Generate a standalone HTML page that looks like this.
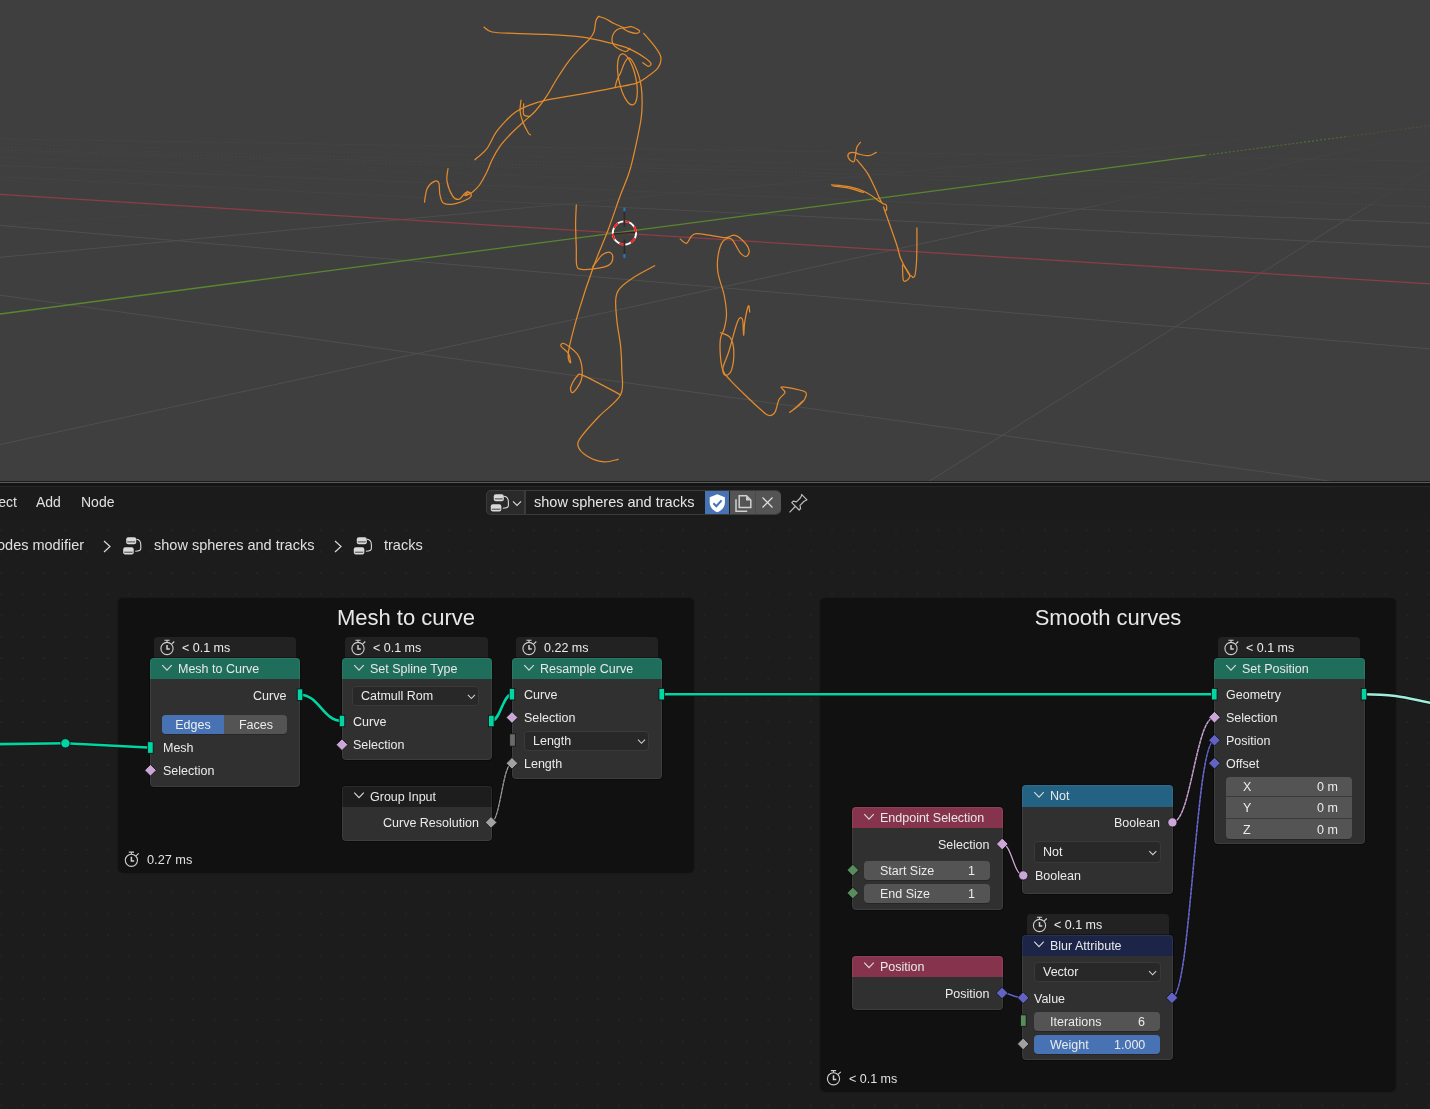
<!DOCTYPE html><html><head><meta charset="utf-8"><style>html,body{margin:0;padding:0}body{width:1430px;height:1109px;overflow:hidden;position:relative;background:#1b1b1b;font-family:"Liberation Sans", sans-serif}.a{position:absolute}.t{position:absolute;white-space:nowrap;line-height:1;will-change:transform}</style></head><body>
<svg class="a" style="left:0;top:0" width="1430" height="481" viewBox="0 0 1430 481">
<rect width="1430" height="481" fill="#3f3f3f"/>
<defs><linearGradient id="gf" x1="0" y1="0" x2="0" y2="481" gradientUnits="userSpaceOnUse"><stop offset="0.24" stop-color="#fff" stop-opacity="0"/><stop offset="0.33" stop-color="#fff" stop-opacity="0.3"/><stop offset="0.415" stop-color="#fff" stop-opacity="0.25"/><stop offset="0.435" stop-color="#fff" stop-opacity="0.8"/><stop offset="0.46" stop-color="#fff" stop-opacity="1"/></linearGradient><mask id="gm"><rect width="1430" height="481" fill="url(#gf)"/></mask></defs><g mask="url(#gm)">
<line x1="-10" y1="143.74" x2="1440" y2="178.23" stroke="#4f4f4f" stroke-width="1" stroke-opacity="1.00" stroke-dasharray="2 1.5"/>
<line x1="-10" y1="147.23" x2="1440" y2="185.64" stroke="#4f4f4f" stroke-width="1" stroke-opacity="1.00" stroke-dasharray="2 1.5"/>
<line x1="-10" y1="151.64" x2="1440" y2="195.00" stroke="#4f4f4f" stroke-width="1" stroke-opacity="1.00" stroke-dasharray="2 1.5"/>
<line x1="-10" y1="157.39" x2="1440" y2="207.20" stroke="#4f4f4f" stroke-width="1" stroke-opacity="1.00" stroke-dasharray="2 1.5"/>
<line x1="-10" y1="165.19" x2="1440" y2="223.75" stroke="#4f4f4f" stroke-width="1" stroke-opacity="1.00" />
<line x1="-10" y1="176.37" x2="1440" y2="247.50" stroke="#4f4f4f" stroke-width="1" stroke-opacity="1.00" />
<line x1="-10" y1="224.55" x2="1440" y2="349.74" stroke="#4f4f4f" stroke-width="1" stroke-opacity="1.00" />
<line x1="-10" y1="293.74" x2="1440" y2="496.58" stroke="#4f4f4f" stroke-width="1" stroke-opacity="1.00" />
<line x1="-10" y1="181.51" x2="1440" y2="117.75" stroke="#4f4f4f" stroke-width="1" stroke-opacity="0.35" stroke-dasharray="2 1.5"/>
<line x1="-10" y1="191.89" x2="1440" y2="118.26" stroke="#4f4f4f" stroke-width="1" stroke-opacity="0.35" stroke-dasharray="2 1.5"/>
<line x1="-10" y1="206.02" x2="1440" y2="118.94" stroke="#4f4f4f" stroke-width="1" stroke-opacity="0.35" stroke-dasharray="2 1.5"/>
<line x1="-10" y1="226.38" x2="1440" y2="119.93" stroke="#4f4f4f" stroke-width="1" stroke-opacity="0.35" stroke-dasharray="2 1.5"/>
<line x1="-10" y1="258.27" x2="1440" y2="121.48" stroke="#4f4f4f" stroke-width="1" stroke-opacity="1.00" />
<line x1="-10" y1="446.73" x2="1440" y2="130.63" stroke="#4f4f4f" stroke-width="1" stroke-opacity="1.00" />
<line x1="-10" y1="1070.08" x2="1440" y2="160.90" stroke="#4f4f4f" stroke-width="1" stroke-opacity="1.00" />
</g>
<line x1="-10" y1="138.84" x2="1440" y2="161.32" stroke="#4a4a4a" stroke-width="1" stroke-dasharray="2 1.5" stroke-opacity="0.6"/>
<line x1="-10" y1="149.72" x2="1440" y2="190.32" stroke="#4a4a4a" stroke-width="1" stroke-dasharray="2 1.5" stroke-opacity="0.6"/>
<line x1="-10" y1="193.77" x2="1440" y2="284.43" stroke="#8f3c47" stroke-width="1.3" />
<line x1="-10" y1="315.32" x2="1205" y2="155.22" stroke="#5a862f" stroke-width="1.3"/>
<line x1="1205" y1="155.22" x2="1345" y2="136.77" stroke="#5a862f" stroke-width="1.1" stroke-dasharray="2 2" stroke-opacity="0.7"/>
<line x1="1345" y1="136.77" x2="1440" y2="124.25" stroke="#5a862f" stroke-width="1.1" stroke-dasharray="2 2" stroke-opacity="0.3"/>
<g fill="none" stroke="#e38b2c" stroke-width="1.25" stroke-linecap="round" stroke-linejoin="round">
<path d="M484.0 27.1C485.4 27.9 487.1 30.9 492.1 32.0C497.1 33.0 504.8 33.0 513.8 33.4C522.8 33.8 536.4 33.9 546.3 34.4C556.2 34.9 566.1 35.6 573.3 36.2C580.5 36.9 583.6 37.2 589.6 38.3C595.6 39.4 602.8 41.0 609.4 42.8C616.0 44.5 623.5 46.4 629.2 48.8C634.9 51.1 640.1 54.5 643.7 56.9C647.3 59.3 650.1 61.6 650.9 63.2C651.6 64.8 649.6 66.4 648.2 66.3C646.9 66.2 643.7 63.3 642.8 62.7"/>
<path d="M598.6 16.3C598.1 17.1 596.6 18.2 595.9 20.8C595.1 23.4 595.1 28.6 594.1 31.6C593.1 34.6 592.2 35.9 589.6 38.9C587.0 41.9 582.3 45.8 578.7 49.7C575.1 53.6 571.5 57.5 567.9 62.3C564.3 67.1 560.7 72.8 557.1 78.5C553.5 84.2 549.9 91.2 546.3 96.6C542.7 102.0 539.0 107.0 535.4 111.0C531.8 115.0 528.8 117.0 524.6 120.9C520.4 124.8 514.4 130.1 510.2 134.5C506.0 138.9 502.4 142.9 499.4 147.1C496.4 151.3 494.2 155.5 492.1 159.7C490.0 163.9 488.8 168.1 486.7 172.3C484.6 176.5 481.9 181.7 479.5 185.0C477.1 188.3 474.7 190.4 472.3 192.2C469.9 193.9 465.6 195.5 465.0 195.5C464.4 195.5 467.6 192.3 468.7 192.2C469.8 192.1 471.4 193.8 471.4 194.9C471.4 196.0 471.5 197.0 468.7 198.5C465.9 200.0 458.5 203.2 454.3 203.9C450.1 204.7 445.8 204.7 443.4 203.0C441.0 201.3 440.6 197.3 439.8 194.0C439.1 190.7 439.8 185.3 438.9 183.2C438.0 181.1 436.3 180.5 434.4 181.4C432.4 182.3 428.8 185.2 427.2 188.6C425.6 192.0 424.9 199.8 424.5 202.1"/>
<path d="M448.0 168.7C447.8 170.8 446.2 176.9 447.0 181.4C447.8 185.9 450.5 192.8 452.5 195.8C454.5 198.8 456.9 199.7 458.8 199.4C460.8 199.1 462.7 195.3 464.2 194.0C465.7 192.7 467.2 191.8 467.8 191.3"/>
<path d="M598.6 16.3C599.8 16.8 603.4 17.8 606.0 19.0C608.6 20.2 611.0 22.1 614.0 23.5C617.0 24.9 621.2 27.1 624.1 27.6C627.0 28.1 628.8 26.2 631.3 26.7C633.8 27.2 638.5 29.6 639.4 30.7C640.3 31.8 638.5 33.2 636.7 33.4C634.9 33.5 630.9 32.4 628.6 31.6C626.4 30.8 624.1 29.0 623.2 28.5"/>
<path d="M624.1 27.6C622.9 28.0 618.9 28.4 616.9 29.8C614.9 31.2 613.1 33.8 612.4 36.1C611.7 38.4 611.8 41.3 612.8 43.4C613.8 45.5 616.5 47.4 618.7 48.8C620.9 50.1 624.0 51.6 625.9 51.5C627.8 51.4 629.3 48.8 630.0 48.3"/>
<path d="M643.7 33.4C645.5 35.5 651.6 42.2 654.5 46.1C657.4 50.0 660.2 53.3 660.8 56.9C661.4 60.5 660.4 64.4 658.1 67.7C655.9 71.0 650.9 74.1 647.3 76.7C643.7 79.3 641.9 81.3 636.5 83.1C631.1 84.9 623.8 85.8 614.8 87.6C605.8 89.4 593.7 91.8 582.3 93.9C570.9 96.0 555.3 98.2 546.3 100.2C537.3 102.2 533.3 103.6 528.2 105.6C523.1 107.5 519.2 109.5 515.6 111.9C512.0 114.3 509.9 116.5 506.6 120.0C503.3 123.5 499.1 127.9 495.8 132.7C492.5 137.5 490.2 144.4 486.7 148.9C483.2 153.4 476.9 157.9 475.0 159.7"/>
<path d="M615.1 87.5C615.4 86.2 616.1 82.4 617.0 80.0C617.9 77.6 619.2 75.9 620.5 73.1C621.8 70.3 623.1 65.5 624.5 63.0C625.9 60.5 627.2 57.9 628.6 57.8C630.0 57.7 631.5 59.4 633.1 62.3C634.8 65.2 637.1 70.9 638.5 74.9C639.9 79.0 640.6 82.4 641.2 86.6C641.8 90.8 642.1 95.0 642.1 100.2C642.1 105.4 642.3 110.2 641.2 118.0C640.1 125.8 637.5 138.0 635.5 147.1C633.5 156.2 631.8 164.2 629.2 172.3C626.7 180.4 623.7 186.3 620.2 195.8C616.7 205.3 612.8 217.5 608.4 229.2C604.0 240.8 598.7 252.3 593.8 265.7C588.9 279.1 583.2 296.2 579.2 309.6C575.2 323.0 571.3 338.0 569.5 346.1C567.7 354.2 568.1 355.5 568.3 358.3C568.5 361.1 570.7 363.5 570.7 362.7C570.7 361.9 569.9 356.2 568.3 353.4C566.7 350.6 561.6 347.7 561.0 346.1C560.4 344.5 562.0 342.5 564.6 343.7C567.2 344.9 573.9 349.8 576.8 353.4C579.6 357.0 581.0 361.1 581.7 365.6C582.4 370.1 582.6 375.7 581.2 380.2C579.8 384.7 574.9 391.2 573.1 392.4C571.4 393.6 570.1 390.1 570.7 387.5C571.3 384.9 574.6 378.4 576.8 376.5C579.0 374.6 576.8 372.8 584.1 375.8C591.4 378.9 614.5 391.6 620.6 394.8"/>
<path d="M576.3 204.9C576.2 208.1 575.6 217.0 575.6 224.3C575.6 231.6 576.1 241.8 576.3 248.7C576.5 255.6 575.9 262.2 576.8 265.7C577.7 269.1 578.1 269.0 581.7 269.4C585.4 269.8 594.0 269.0 598.7 268.2C603.4 267.4 607.4 266.3 609.7 264.5C612.1 262.7 612.8 259.2 612.8 257.2C612.8 255.2 611.5 252.7 609.7 252.3C608.0 251.9 604.5 253.2 602.3 254.8C600.1 256.4 597.9 260.1 596.3 262.1C594.7 264.1 593.2 266.2 592.6 267.0"/>
<path d="M654.7 265.7C651.1 267.7 638.7 274.0 632.8 277.9C626.9 281.8 622.2 285.2 619.4 288.9C616.5 292.5 616.1 294.3 615.7 299.8C615.3 305.3 616.2 314.0 617.0 321.7C617.8 329.4 619.8 338.0 620.6 346.1C621.4 354.2 621.8 362.3 621.8 370.4C621.8 378.5 624.5 387.1 620.6 394.8C616.8 402.5 605.2 409.8 598.7 416.7C592.2 423.6 585.2 431.3 581.7 436.2C578.2 441.1 577.2 442.6 578.0 445.9C578.8 449.1 582.2 453.0 586.5 455.7C590.8 458.4 598.3 461.2 603.6 461.8C608.9 462.4 615.8 459.7 618.2 459.3"/>
<path d="M680.3 239.0C681.3 239.7 684.6 243.7 686.4 243.3C688.2 242.9 689.6 238.1 691.2 236.5C692.8 234.9 692.9 233.8 696.1 233.6C699.4 233.4 705.8 234.6 710.7 235.3C715.6 236.0 721.2 237.7 725.3 237.7C729.4 237.7 731.9 234.5 735.1 235.3C738.4 236.1 742.4 240.0 744.8 242.6C747.1 245.2 749.0 248.8 749.2 251.1C749.4 253.4 747.5 256.3 746.0 256.5C744.5 256.7 742.3 255.2 739.9 252.3C737.5 249.4 734.2 240.8 731.4 239.0C728.6 237.2 725.1 238.6 722.9 241.4C720.7 244.2 718.8 250.7 718.0 256.0C717.2 261.3 717.0 266.5 718.0 273.0C719.0 279.5 722.7 288.1 724.1 295.0C725.5 301.9 726.5 308.7 726.5 314.4C726.5 320.1 725.1 324.9 724.1 329.0C723.1 333.1 721.0 334.3 720.4 338.8C719.8 343.3 720.0 350.5 720.4 355.8C720.8 361.1 721.3 366.3 722.9 370.4C724.5 374.5 726.6 376.1 730.2 380.2C733.9 384.3 739.5 389.7 744.8 394.8C750.1 399.9 757.8 407.2 761.8 410.6C765.8 414.1 766.9 415.3 769.1 415.5C771.3 415.7 773.6 414.4 775.2 411.8C776.8 409.2 777.3 402.9 778.9 399.7C780.5 396.5 784.6 394.5 785.0 392.4C785.4 390.3 779.9 387.6 781.3 387.0C782.7 386.4 789.4 387.8 793.5 388.7C797.6 389.6 803.9 390.6 805.7 392.4C807.5 394.2 805.6 397.5 804.4 399.7C803.2 401.9 800.8 403.6 798.4 405.7C796.0 407.8 790.6 411.7 789.8 412.3C789.0 412.9 791.3 411.4 793.5 409.5C795.7 407.6 801.4 402.4 803.0 401.0"/>
<path d="M720.4 332.7C722.0 333.5 728.0 334.6 730.2 337.6C732.4 340.7 733.6 345.5 733.8 351.0C734.0 356.5 732.8 366.3 731.4 370.4C730.0 374.4 726.7 375.7 725.3 375.3C723.9 374.9 722.3 372.1 722.9 368.0C723.5 363.9 726.6 358.7 729.0 351.0C731.4 343.3 735.3 327.0 737.5 321.7C739.7 316.4 741.4 317.1 742.4 319.3C743.4 321.5 743.2 334.7 743.6 335.1C744.0 335.5 744.0 326.6 744.8 321.7C745.6 316.8 747.6 307.5 748.4 305.9C749.2 304.3 749.5 311.0 749.7 312.0"/>
<path d="M860.4 142.3C859.8 143.1 857.6 144.9 856.8 147.3C855.9 149.7 855.8 154.3 855.3 156.7C854.8 159.1 854.8 161.2 853.9 161.7C853.0 162.2 850.6 160.8 849.6 159.6C848.6 158.4 847.6 155.7 848.1 154.5C848.6 153.3 850.5 152.4 852.5 152.4C854.5 152.4 857.6 153.9 860.4 154.5C863.1 155.1 866.4 156.0 869.0 155.7C871.6 155.3 875.1 152.9 876.3 152.4"/>
<path d="M856.8 159.6C858.6 161.9 864.5 168.4 867.6 173.3C870.7 178.2 873.0 184.1 875.4 189.0C877.8 193.9 880.0 200.0 881.7 202.6C883.4 205.2 885.0 203.3 885.8 204.4C886.6 205.5 886.8 207.9 886.7 209.0C886.6 210.1 885.8 211.1 885.3 210.8C884.8 210.5 883.0 205.6 883.5 207.1C884.0 208.6 885.7 213.3 888.0 219.8C890.3 226.3 895.0 239.5 897.1 246.0C899.2 252.5 898.8 253.9 900.7 258.6C902.7 263.3 907.1 271.1 908.8 274.0C910.5 276.9 910.4 275.1 911.1 275.7C911.9 276.3 912.6 277.6 913.3 277.5C914.0 277.4 914.6 277.4 915.1 274.8C915.6 272.2 916.2 267.0 916.5 262.2C916.8 257.4 916.8 251.7 916.9 246.0C917.0 240.3 916.9 230.9 916.9 227.9"/>
<path d="M902.5 264.9C902.6 267.5 902.5 277.9 903.4 280.3C904.3 282.7 906.8 280.3 907.9 279.4C909.0 278.5 910.4 277.0 909.7 274.8C909.1 272.6 905.0 267.5 904.0 266.0"/>
<path d="M831.5 184.8C834.4 185.1 843.0 185.4 848.8 186.7C854.6 188.0 860.9 189.9 866.2 192.5C871.5 195.1 878.2 200.5 880.6 202.1"/>
<path d="M833.0 186.0C835.6 186.4 843.8 187.1 848.8 188.2C853.8 189.3 860.9 191.8 863.3 192.5"/>
<path d="M521.0 100.2C520.9 102.0 519.8 107.4 520.1 111.0C520.4 114.6 521.4 118.2 522.8 121.8C524.1 125.4 526.9 130.5 528.2 132.7C529.5 134.9 530.0 134.5 530.4 134.8"/>
<path d="M523.7 103.8C523.7 105.6 522.7 112.5 523.7 114.6C524.8 116.7 529.0 116.1 530.0 116.4"/>

<ellipse cx="627.4" cy="79.4" rx="8.5" ry="26" transform="rotate(-12 627.4 79.4)"/>
</g>
<circle cx="624.4" cy="233.0" r="11.6" fill="none" stroke="#ffffff" stroke-width="1.9"/>
<circle cx="624.4" cy="233.0" r="11.6" fill="none" stroke="#ff1a1a" stroke-width="1.9" stroke-dasharray="6.07 6.07" transform="rotate(-95 624.4 233.0)"/>
<path d="M613.4 233.6L635.4 232.6" stroke="#151515" stroke-width="1.3" stroke-opacity="0.7"/>
<path d="M624.4 211V226.5M624.4 239.5V254" stroke="#2a2a2a" stroke-width="1.6"/>
<path d="M624.4 207.5V211.5M624.4 254V258" stroke="#2f6fd0" stroke-width="2"/>
</svg>
<div class="a" style="left:0.00px;top:481.50px;width:1430.00px;height:1.70px;background:#5a5a5a;"></div>
<div class="a" style="left:0.00px;top:483.20px;width:1430.00px;height:2.80px;background:#141414;"></div>
<div class="a" style="left:0.00px;top:486.00px;width:1430.00px;height:1.20px;background:#272727;"></div>
<div class="a" style="left:0;top:487px;width:1430px;height:622px;background-color:#1c1c1c;background-image:radial-gradient(circle at 1.1px 1.1px,#242424 0.8px,transparent 1.3px);background-size:21.3px 21.3px;background-position:0.5px -0.2px"></div>
<div class="a" style="left:0.00px;top:487.20px;width:1430.00px;height:31.80px;background:#1b1b1b;"></div>
<div class="t" style="left:-22.50px;top:495.00px;font-size:14px;color:#e0e0e0;">Select</div>
<div class="t" style="left:36.40px;top:495.00px;font-size:14px;color:#e0e0e0;">Add</div>
<div class="t" style="left:80.50px;top:495.00px;font-size:14px;color:#e0e0e0;">Node</div>
<div class="a" style="left:485.5px;top:490px;width:295px;height:25px;border-radius:5px;overflow:hidden;background:#1d1d1d;box-shadow:inset 0 0 0 1px #3b3b3b"><div style="position:absolute;left:0;top:0;width:39px;height:25px;background:#2a2a2a;box-shadow:inset 0 0 0 1px #3b3b3b;border-radius:5px 0 0 5px"></div><div style="position:absolute;left:39px;top:0;width:1px;height:25px;background:#3b3b3b"></div><div style="position:absolute;left:219.5px;top:1px;width:24px;height:23px;background:#4772b3"></div><div style="position:absolute;left:244.5px;top:1px;width:24.5px;height:23px;background:#545454"></div><div style="position:absolute;left:269px;top:1px;width:1px;height:23px;background:#4a4a4a"></div><div style="position:absolute;left:270px;top:1px;width:25px;height:23px;background:#545454;border-radius:0 5px 5px 0"></div></div>
<div class="t" style="left:534.30px;top:495.00px;font-size:14.5px;color:#e6e6e6;">show spheres and tracks</div>
<div class="t" style="left:-3.00px;top:538.00px;font-size:14.5px;color:#e0e0e0;">odes modifier</div>
<div class="t" style="left:153.60px;top:538.00px;font-size:14.5px;color:#e0e0e0;">show spheres and tracks</div>
<div class="t" style="left:383.70px;top:538.00px;font-size:14.5px;color:#e0e0e0;">tracks</div>
<div class="a" style="left:118px;top:598px;width:576px;height:274.5px;background:rgba(17,17,17,0.9);border-radius:5px;box-shadow:0 0 2px rgba(0,0,0,0.2)"></div>
<div class="a" style="left:820px;top:598px;width:576px;height:493.5px;background:rgba(17,17,17,0.9);border-radius:5px;box-shadow:0 0 2px rgba(0,0,0,0.2)"></div>
<div class="t" style="left:406.00px;transform:translateX(-50%);top:607.00px;font-size:22px;color:#e8e8e8;">Mesh to curve</div>
<div class="t" style="left:1108.40px;transform:translateX(-50%);top:607.00px;font-size:22px;color:#e8e8e8;">Smooth curves</div>
<div class="t" style="left:146.50px;top:854.00px;font-size:12.75px;color:#e0e0e0;">0.27 ms</div>
<div class="t" style="left:848.70px;top:1073.00px;font-size:12.5px;color:#e0e0e0;">&lt; 0.1 ms</div>
<svg class="a" style="left:0;top:0" width="1430" height="1109" viewBox="0 0 1430 1109">
<path d="M-5 744.2L65.4 743.3" fill="none" stroke="#0c0c0c" stroke-width="4.0" stroke-opacity="0.85"/>
<path d="M-5 744.2L65.4 743.3" fill="none" stroke="#00d6a3" stroke-width="2.6"/>
<path d="M65.4 743.3L148 747.5" fill="none" stroke="#0c0c0c" stroke-width="4.0" stroke-opacity="0.85"/>
<path d="M65.4 743.3L148 747.5" fill="none" stroke="#00d6a3" stroke-width="2.6"/>
<path d="M300.0 694.7C318.9 694.7 323.1 721.0 342.0 721.0" fill="none" stroke="#0c0c0c" stroke-width="4.0" stroke-opacity="0.85"/>
<path d="M300.0 694.7C318.9 694.7 323.1 721.0 342.0 721.0" fill="none" stroke="#00d6a3" stroke-width="2.6"/>
<path d="M491.3 721.0C500.6 721.0 502.7 694.2 512.0 694.2" fill="none" stroke="#0c0c0c" stroke-width="4.0" stroke-opacity="0.85"/>
<path d="M491.3 721.0C500.6 721.0 502.7 694.2 512.0 694.2" fill="none" stroke="#00d6a3" stroke-width="2.6"/>
<path d="M661.7 694.2L1214.3 694.2" fill="none" stroke="#0c0c0c" stroke-width="4.0" stroke-opacity="0.85"/>
<path d="M661.7 694.2L1214.3 694.2" fill="none" stroke="#00d6a3" stroke-width="2.6"/>
<path d="M1364.0 694.2C1417.0 694.2 1417.0 706.0 1470.0 706.0" fill="none" stroke="#0c0c0c" stroke-width="4.0" stroke-opacity="0.85"/>
<path d="M1364.0 694.2C1417.0 694.2 1417.0 706.0 1470.0 706.0" fill="none" stroke="#9eeedb" stroke-width="2.6"/>
<path d="M491.0 822.4C500.4 822.4 502.6 763.3 512.0 763.3" fill="none" stroke="#0c0c0c" stroke-width="2.7" stroke-opacity="0.85"/>
<path d="M491.0 822.4C500.4 822.4 502.6 763.3 512.0 763.3" fill="none" stroke="#a1a1a1" stroke-width="1.3"/>
<path d="M491.0 822.4C500.4 822.4 502.6 763.3 512.0 763.3" fill="none" stroke="#202020" stroke-opacity="0.45" stroke-width="1.3" stroke-dasharray="1.2 3"/>
<path d="M1002.2 844.0C1011.7 844.0 1013.8 875.4 1023.3 875.4" fill="none" stroke="#0c0c0c" stroke-width="2.7" stroke-opacity="0.85"/>
<path d="M1002.2 844.0C1011.7 844.0 1013.8 875.4 1023.3 875.4" fill="none" stroke="#cca6d6" stroke-width="1.3"/>
<path d="M1172.4 822.4C1191.3 822.4 1195.6 717.3 1214.5 717.3" fill="none" stroke="#0c0c0c" stroke-width="2.9" stroke-opacity="0.85"/>
<path d="M1172.4 822.4C1191.3 822.4 1195.6 717.3 1214.5 717.3" fill="none" stroke="#cca6d6" stroke-width="1.5"/>
<path d="M1172.4 822.4C1191.3 822.4 1195.6 717.3 1214.5 717.3" fill="none" stroke="#202020" stroke-opacity="0.45" stroke-width="1.5" stroke-dasharray="1.2 3"/>
<path d="M1002.0 993.0C1011.5 993.0 1013.7 997.8 1023.2 997.8" fill="none" stroke="#0c0c0c" stroke-width="3.0" stroke-opacity="0.85"/>
<path d="M1002.0 993.0C1011.5 993.0 1013.7 997.8 1023.2 997.8" fill="none" stroke="#6363c7" stroke-width="1.6"/>
<path d="M1171.9 997.8C1191.1 997.8 1195.3 740.2 1214.5 740.2" fill="none" stroke="#0c0c0c" stroke-width="3.0" stroke-opacity="0.85"/>
<path d="M1171.9 997.8C1191.1 997.8 1195.3 740.2 1214.5 740.2" fill="none" stroke="#6b6bd6" stroke-width="1.6"/>
<path d="M1171.9 997.8C1191.1 997.8 1195.3 740.2 1214.5 740.2" fill="none" stroke="#202020" stroke-opacity="0.45" stroke-width="1.6" stroke-dasharray="1.2 3"/>
<circle cx="65.4" cy="743.3" r="4.6" fill="#00d6a3" stroke="#101010" stroke-width="0.8"/>
</svg>
<div class="a" style="left:154.00px;top:637.00px;width:142.00px;height:29.00px;background:#222222;border-radius:4px 4px 0 0;"></div>
<div class="t" style="left:181.50px;top:642.00px;font-size:12.5px;color:#ebebeb;">&lt; 0.1 ms</div>
<div class="a" style="left:150.00px;top:658.00px;width:150.00px;height:129.00px;background:#303030;border-radius:4px;box-shadow:0 0 0 1px rgba(0,0,0,0.35);overflow:hidden"><div style="position:absolute;left:0;top:0;right:0;height:21.00px;background:#1e6e5b"></div><div style="position:absolute;left:0;top:0;right:0;bottom:0;border-radius:4px;box-shadow:inset 0 0 0 1px rgba(255,255,255,0.065)"></div></div>
<div class="t" style="left:177.50px;top:663.00px;font-size:12.5px;color:#e8e8e8;">Mesh to Curve</div>
<div class="t" style="right:1143.60px;top:690.00px;font-size:12.5px;color:#ebebeb;">Curve</div>
<div class="a" style="left:162px;top:714.8px;width:125px;height:19.4px;border-radius:4px;overflow:hidden;background:#545454;box-shadow:0 1px 0 #262626"><div style="position:absolute;left:0;top:0;width:62.2px;height:100%;background:#4772b3"></div></div>
<div class="t" style="left:193.10px;transform:translateX(-50%);top:719.00px;font-size:12.5px;color:#f0f0f0;">Edges</div>
<div class="t" style="left:255.60px;transform:translateX(-50%);top:719.00px;font-size:12.5px;color:#ebebeb;">Faces</div>
<div class="t" style="left:162.50px;top:742.00px;font-size:12.5px;color:#ebebeb;">Mesh</div>
<div class="t" style="left:162.50px;top:765.00px;font-size:12.5px;color:#ebebeb;">Selection</div>
<div class="a" style="left:345.00px;top:637.00px;width:143.00px;height:29.00px;background:#222222;border-radius:4px 4px 0 0;"></div>
<div class="t" style="left:372.50px;top:642.00px;font-size:12.5px;color:#ebebeb;">&lt; 0.1 ms</div>
<div class="a" style="left:342.00px;top:658.00px;width:150.00px;height:102.00px;background:#303030;border-radius:4px;box-shadow:0 0 0 1px rgba(0,0,0,0.35);overflow:hidden"><div style="position:absolute;left:0;top:0;right:0;height:21.00px;background:#1e6e5b"></div><div style="position:absolute;left:0;top:0;right:0;bottom:0;border-radius:4px;box-shadow:inset 0 0 0 1px rgba(255,255,255,0.065)"></div></div>
<div class="t" style="left:369.50px;top:663.00px;font-size:12.5px;color:#e8e8e8;">Set Spline Type</div>
<div class="a" style="left:352.40px;top:685.50px;width:127.00px;height:20.90px;background:#282828;border-radius:4px;box-shadow:inset 0 0 0 1px #3a3a3a;"></div>
<div class="t" style="left:361.40px;top:690.00px;font-size:12.5px;color:#ebebeb;">Catmull Rom</div>
<div class="t" style="left:353.00px;top:716.00px;font-size:12.5px;color:#ebebeb;">Curve</div>
<div class="t" style="left:353.00px;top:739.00px;font-size:12.5px;color:#ebebeb;">Selection</div>
<div class="a" style="left:342.00px;top:785.50px;width:150.00px;height:55.00px;background:#303030;border-radius:4px;box-shadow:0 0 0 1px rgba(0,0,0,0.35);overflow:hidden"><div style="position:absolute;left:0;top:0;right:0;height:21.10px;background:#1d1d1d"></div><div style="position:absolute;left:0;top:0;right:0;bottom:0;border-radius:4px;box-shadow:inset 0 0 0 1px rgba(255,255,255,0.065)"></div></div>
<div class="t" style="left:369.50px;top:791.00px;font-size:12.5px;color:#e8e8e8;">Group Input</div>
<div class="t" style="right:951.60px;top:817.00px;font-size:12.5px;color:#ebebeb;">Curve Resolution</div>
<div class="a" style="left:516.00px;top:637.00px;width:142.00px;height:29.00px;background:#222222;border-radius:4px 4px 0 0;"></div>
<div class="t" style="left:543.50px;top:642.00px;font-size:12.5px;color:#ebebeb;">0.22 ms</div>
<div class="a" style="left:512.00px;top:658.00px;width:150.00px;height:121.00px;background:#303030;border-radius:4px;box-shadow:0 0 0 1px rgba(0,0,0,0.35);overflow:hidden"><div style="position:absolute;left:0;top:0;right:0;height:21.00px;background:#1e6e5b"></div><div style="position:absolute;left:0;top:0;right:0;bottom:0;border-radius:4px;box-shadow:inset 0 0 0 1px rgba(255,255,255,0.065)"></div></div>
<div class="t" style="left:539.50px;top:663.00px;font-size:12.5px;color:#e8e8e8;">Resample Curve</div>
<div class="t" style="left:524.00px;top:689.00px;font-size:12.5px;color:#ebebeb;">Curve</div>
<div class="t" style="left:524.00px;top:712.00px;font-size:12.5px;color:#ebebeb;">Selection</div>
<div class="a" style="left:523.70px;top:730.80px;width:125.80px;height:19.80px;background:#282828;border-radius:4px;box-shadow:inset 0 0 0 1px #3a3a3a;"></div>
<div class="t" style="left:532.70px;top:735.00px;font-size:12.5px;color:#ebebeb;">Length</div>
<div class="t" style="left:524.00px;top:758.00px;font-size:12.5px;color:#ebebeb;">Length</div>
<div class="a" style="left:1218.00px;top:637.00px;width:142.00px;height:29.00px;background:#222222;border-radius:4px 4px 0 0;"></div>
<div class="t" style="left:1245.50px;top:642.00px;font-size:12.5px;color:#ebebeb;">&lt; 0.1 ms</div>
<div class="a" style="left:1214.00px;top:658.00px;width:150.50px;height:186.00px;background:#303030;border-radius:4px;box-shadow:0 0 0 1px rgba(0,0,0,0.35);overflow:hidden"><div style="position:absolute;left:0;top:0;right:0;height:21.00px;background:#1e6e5b"></div><div style="position:absolute;left:0;top:0;right:0;bottom:0;border-radius:4px;box-shadow:inset 0 0 0 1px rgba(255,255,255,0.065)"></div></div>
<div class="t" style="left:1241.50px;top:663.00px;font-size:12.5px;color:#e8e8e8;">Set Position</div>
<div class="t" style="left:1226.00px;top:689.00px;font-size:12.5px;color:#ebebeb;">Geometry</div>
<div class="t" style="left:1226.00px;top:712.00px;font-size:12.5px;color:#ebebeb;">Selection</div>
<div class="t" style="left:1226.00px;top:735.00px;font-size:12.5px;color:#ebebeb;">Position</div>
<div class="t" style="left:1226.00px;top:758.00px;font-size:12.5px;color:#ebebeb;">Offset</div>
<div class="a" style="left:1226px;top:776.8px;width:126px;height:62.7px;border-radius:4px;overflow:hidden;background:#545454;box-shadow:0 1px 0 #262626"><div style="position:absolute;left:0;top:19.7px;width:100%;height:1px;background:#3a3a3a"></div><div style="position:absolute;left:0;top:40.9px;width:100%;height:1px;background:#3a3a3a"></div></div>
<div class="t" style="left:1242.50px;top:781.00px;font-size:12.5px;color:#ebebeb;">X</div>
<div class="t" style="right:92.00px;top:781.00px;font-size:12.5px;color:#ebebeb;">0 m</div>
<div class="t" style="left:1242.50px;top:802.00px;font-size:12.5px;color:#ebebeb;">Y</div>
<div class="t" style="right:92.00px;top:802.00px;font-size:12.5px;color:#ebebeb;">0 m</div>
<div class="t" style="left:1242.50px;top:824.00px;font-size:12.5px;color:#ebebeb;">Z</div>
<div class="t" style="right:92.00px;top:824.00px;font-size:12.5px;color:#ebebeb;">0 m</div>
<div class="a" style="left:852.00px;top:807.00px;width:151.00px;height:103.00px;background:#303030;border-radius:4px;box-shadow:0 0 0 1px rgba(0,0,0,0.35);overflow:hidden"><div style="position:absolute;left:0;top:0;right:0;height:21.00px;background:#86344e"></div><div style="position:absolute;left:0;top:0;right:0;bottom:0;border-radius:4px;box-shadow:inset 0 0 0 1px rgba(255,255,255,0.065)"></div></div>
<div class="t" style="left:879.50px;top:812.00px;font-size:12.5px;color:#e8e8e8;">Endpoint Selection</div>
<div class="t" style="right:440.70px;top:839.00px;font-size:12.5px;color:#ebebeb;">Selection</div>
<div class="a" style="left:863.70px;top:860.80px;width:126.50px;height:19.50px;background:#545454;border-radius:4px;box-shadow:0 1px 0 #262626"></div>
<div class="t" style="left:880.20px;top:865.00px;font-size:12.5px;color:#ebebeb;">Start Size</div>
<div class="t" style="right:455.30px;top:865.00px;font-size:12.5px;color:#ebebeb;">1</div>
<div class="a" style="left:863.70px;top:883.90px;width:126.50px;height:19.30px;background:#545454;border-radius:4px;box-shadow:0 1px 0 #262626"></div>
<div class="t" style="left:880.20px;top:888.00px;font-size:12.5px;color:#ebebeb;">End Size</div>
<div class="t" style="right:455.30px;top:888.00px;font-size:12.5px;color:#ebebeb;">1</div>
<div class="a" style="left:1022.00px;top:785.00px;width:151.00px;height:109.00px;background:#303030;border-radius:4px;box-shadow:0 0 0 1px rgba(0,0,0,0.35);overflow:hidden"><div style="position:absolute;left:0;top:0;right:0;height:22.00px;background:#246283"></div><div style="position:absolute;left:0;top:0;right:0;bottom:0;border-radius:4px;box-shadow:inset 0 0 0 1px rgba(255,255,255,0.065)"></div></div>
<div class="t" style="left:1049.50px;top:790.00px;font-size:12.5px;color:#e8e8e8;">Not</div>
<div class="t" style="right:270.40px;top:817.00px;font-size:12.5px;color:#ebebeb;">Boolean</div>
<div class="a" style="left:1033.60px;top:841.30px;width:127.20px;height:21.50px;background:#282828;border-radius:4px;box-shadow:inset 0 0 0 1px #3a3a3a;"></div>
<div class="t" style="left:1042.60px;top:846.00px;font-size:12.5px;color:#ebebeb;">Not</div>
<div class="t" style="left:1034.60px;top:870.00px;font-size:12.5px;color:#ebebeb;">Boolean</div>
<div class="a" style="left:852.00px;top:955.60px;width:151.00px;height:54.40px;background:#303030;border-radius:4px;box-shadow:0 0 0 1px rgba(0,0,0,0.35);overflow:hidden"><div style="position:absolute;left:0;top:0;right:0;height:21.50px;background:#86344e"></div><div style="position:absolute;left:0;top:0;right:0;bottom:0;border-radius:4px;box-shadow:inset 0 0 0 1px rgba(255,255,255,0.065)"></div></div>
<div class="t" style="left:879.50px;top:961.00px;font-size:12.5px;color:#e8e8e8;">Position</div>
<div class="t" style="right:440.70px;top:988.00px;font-size:12.5px;color:#ebebeb;">Position</div>
<div class="a" style="left:1026.50px;top:914.00px;width:142.50px;height:28.50px;background:#222222;border-radius:4px 4px 0 0;"></div>
<div class="t" style="left:1054.00px;top:919.00px;font-size:12.5px;color:#ebebeb;">&lt; 0.1 ms</div>
<div class="a" style="left:1022.00px;top:934.50px;width:151.00px;height:125.50px;background:#303030;border-radius:4px;box-shadow:0 0 0 1px rgba(0,0,0,0.35);overflow:hidden"><div style="position:absolute;left:0;top:0;right:0;height:21.50px;background:#1c2548"></div><div style="position:absolute;left:0;top:0;right:0;bottom:0;border-radius:4px;box-shadow:inset 0 0 0 1px rgba(255,255,255,0.065)"></div></div>
<div class="t" style="left:1049.50px;top:940.00px;font-size:12.5px;color:#e8e8e8;">Blur Attribute</div>
<div class="a" style="left:1033.70px;top:962.10px;width:126.90px;height:20.20px;background:#282828;border-radius:4px;box-shadow:inset 0 0 0 1px #3a3a3a;"></div>
<div class="t" style="left:1042.70px;top:966.00px;font-size:12.5px;color:#ebebeb;">Vector</div>
<div class="t" style="left:1034.00px;top:993.00px;font-size:12.5px;color:#ebebeb;">Value</div>
<div class="a" style="left:1033.70px;top:1011.70px;width:126.60px;height:19.50px;background:#545454;border-radius:4px;box-shadow:0 1px 0 #262626"></div>
<div class="t" style="left:1050.20px;top:1016.00px;font-size:12.5px;color:#ebebeb;">Iterations</div>
<div class="t" style="right:285.20px;top:1016.00px;font-size:12.5px;color:#ebebeb;">6</div>
<div class="a" style="left:1033.70px;top:1035.00px;width:126.60px;height:19.40px;background:#4772b3;border-radius:4px;box-shadow:0 1px 0 #262626"></div>
<div class="t" style="left:1050.20px;top:1039.00px;font-size:12.5px;color:#ebebeb;">Weight</div>
<div class="t" style="right:285.20px;top:1039.00px;font-size:12.5px;color:#ebebeb;">1.000</div>
<svg class="a" style="left:0;top:0" width="1430" height="1109" viewBox="0 0 1430 1109"><g fill="none" stroke="#cfcfcf" stroke-width="1.1"><circle cx="131.40" cy="860.30" r="6.1"/><path d="M128.80 852.10H134.00M131.40 852.10V854.20M136.00 855.90L138.70 853.30"/><path d="M131.40 856.70V860.90H134.20" stroke-width="1.5"/></g><g fill="none" stroke="#cfcfcf" stroke-width="1.1"><circle cx="833.50" cy="1078.80" r="6.1"/><path d="M830.90 1070.60H836.10M833.50 1070.60V1072.70M838.10 1074.40L840.80 1071.80"/><path d="M833.50 1075.20V1079.40H836.30" stroke-width="1.5"/></g><g fill="none" stroke="#cfcfcf" stroke-width="1.1"><circle cx="167.00" cy="648.50" r="6.1"/><path d="M164.40 640.30H169.60M167.00 640.30V642.40M171.60 644.10L174.30 641.50"/><path d="M167.00 644.90V649.10H169.80" stroke-width="1.5"/></g><path d="M162.25 665.10L167.00 670.10L171.75 665.10" fill="none" stroke="#d8d8d8" stroke-width="1.15"/><g fill="none" stroke="#cfcfcf" stroke-width="1.1"><circle cx="358.00" cy="648.50" r="6.1"/><path d="M355.40 640.30H360.60M358.00 640.30V642.40M362.60 644.10L365.30 641.50"/><path d="M358.00 644.90V649.10H360.80" stroke-width="1.5"/></g><path d="M354.25 665.10L359.00 670.10L363.75 665.10" fill="none" stroke="#d8d8d8" stroke-width="1.15"/><path d="M467.90 694.95L471.40 698.55L474.90 694.95" fill="none" stroke="#d0d0d0" stroke-width="1.1"/><path d="M354.25 792.60L359.00 797.60L363.75 792.60" fill="none" stroke="#d8d8d8" stroke-width="1.15"/><g fill="none" stroke="#cfcfcf" stroke-width="1.1"><circle cx="529.00" cy="648.50" r="6.1"/><path d="M526.40 640.30H531.60M529.00 640.30V642.40M533.60 644.10L536.30 641.50"/><path d="M529.00 644.90V649.10H531.80" stroke-width="1.5"/></g><path d="M524.25 665.10L529.00 670.10L533.75 665.10" fill="none" stroke="#d8d8d8" stroke-width="1.15"/><path d="M638.00 739.70L641.50 743.30L645.00 739.70" fill="none" stroke="#d0d0d0" stroke-width="1.1"/><g fill="none" stroke="#cfcfcf" stroke-width="1.1"><circle cx="1231.00" cy="648.50" r="6.1"/><path d="M1228.40 640.30H1233.60M1231.00 640.30V642.40M1235.60 644.10L1238.30 641.50"/><path d="M1231.00 644.90V649.10H1233.80" stroke-width="1.5"/></g><path d="M1226.25 665.10L1231.00 670.10L1235.75 665.10" fill="none" stroke="#d8d8d8" stroke-width="1.15"/><path d="M864.25 814.10L869.00 819.10L873.75 814.10" fill="none" stroke="#d8d8d8" stroke-width="1.15"/><path d="M1034.25 792.10L1039.00 797.10L1043.75 792.10" fill="none" stroke="#d8d8d8" stroke-width="1.15"/><path d="M1149.30 851.05L1152.80 854.65L1156.30 851.05" fill="none" stroke="#d0d0d0" stroke-width="1.1"/><path d="M864.25 962.70L869.00 967.70L873.75 962.70" fill="none" stroke="#d8d8d8" stroke-width="1.15"/><g fill="none" stroke="#cfcfcf" stroke-width="1.1"><circle cx="1039.50" cy="925.50" r="6.1"/><path d="M1036.90 917.30H1042.10M1039.50 917.30V919.40M1044.10 921.10L1046.80 918.50"/><path d="M1039.50 921.90V926.10H1042.30" stroke-width="1.5"/></g><path d="M1034.25 941.60L1039.00 946.60L1043.75 941.60" fill="none" stroke="#d8d8d8" stroke-width="1.15"/><path d="M1149.10 971.20L1152.60 974.80L1156.10 971.20" fill="none" stroke="#d0d0d0" stroke-width="1.1"/><rect x="297.25" y="688.95" width="5.5" height="11.5" fill="#00d6a3" stroke="#111" stroke-width="0.8"/><rect x="147.65" y="741.75" width="5.5" height="11.5" fill="#00d6a3" stroke="#111" stroke-width="0.8"/><path d="M150.50 764.50L156.30 770.30L150.50 776.10L144.70 770.30Z" fill="#cca6d6" stroke="#111" stroke-width="0.8"/><rect x="339.25" y="715.25" width="5.5" height="11.5" fill="#00d6a3" stroke="#111" stroke-width="0.8"/><rect x="488.55" y="715.25" width="5.5" height="11.5" fill="#00d6a3" stroke="#111" stroke-width="0.8"/><path d="M342.00 738.90L347.80 744.70L342.00 750.50L336.20 744.70Z" fill="#cca6d6" stroke="#111" stroke-width="0.8"/><path d="M491.00 816.60L496.80 822.40L491.00 828.20L485.20 822.40Z" fill="#a1a1a1" stroke="#111" stroke-width="0.8"/><rect x="509.25" y="688.45" width="5.5" height="11.5" fill="#00d6a3" stroke="#111" stroke-width="0.8"/><rect x="658.95" y="688.45" width="5.5" height="11.5" fill="#00d6a3" stroke="#111" stroke-width="0.8"/><path d="M512.00 711.70L517.80 717.50L512.00 723.30L506.20 717.50Z" fill="#cca6d6" stroke="#111" stroke-width="0.8"/><rect x="509.70" y="733.85" width="5.6" height="12.3" fill="#6b6b6b" stroke="#111" stroke-width="0.8"/><path d="M512.00 757.50L517.80 763.30L512.00 769.10L506.20 763.30Z" fill="#a1a1a1" stroke="#111" stroke-width="0.8"/><rect x="1211.55" y="688.45" width="5.5" height="11.5" fill="#00d6a3" stroke="#111" stroke-width="0.8"/><rect x="1361.25" y="688.45" width="5.5" height="11.5" fill="#00d6a3" stroke="#111" stroke-width="0.8"/><path d="M1214.50 711.50L1220.30 717.30L1214.50 723.10L1208.70 717.30Z" fill="#cca6d6" stroke="#111" stroke-width="0.8"/><path d="M1214.50 734.40L1220.30 740.20L1214.50 746.00L1208.70 740.20Z" fill="#6363c7" stroke="#111" stroke-width="0.8"/><path d="M1214.50 757.40L1220.30 763.20L1214.50 769.00L1208.70 763.20Z" fill="#6363c7" stroke="#111" stroke-width="0.8"/><path d="M1002.20 838.20L1008.00 844.00L1002.20 849.80L996.40 844.00Z" fill="#cca6d6" stroke="#111" stroke-width="0.8"/><path d="M852.90 864.30L858.70 870.10L852.90 875.90L847.10 870.10Z" fill="#598c5c" stroke="#111" stroke-width="0.8"/><path d="M852.90 887.20L858.70 893.00L852.90 898.80L847.10 893.00Z" fill="#598c5c" stroke="#111" stroke-width="0.8"/><circle cx="1172.40" cy="822.40" r="4.6" fill="#cca6d6" stroke="#111" stroke-width="0.8"/><circle cx="1023.30" cy="875.40" r="4.6" fill="#cca6d6" stroke="#111" stroke-width="0.8"/><path d="M1002.00 987.20L1007.80 993.00L1002.00 998.80L996.20 993.00Z" fill="#6363c7" stroke="#111" stroke-width="0.8"/><path d="M1023.20 992.00L1029.00 997.80L1023.20 1003.60L1017.40 997.80Z" fill="#6363c7" stroke="#111" stroke-width="0.8"/><path d="M1171.90 992.00L1177.70 997.80L1171.90 1003.60L1166.10 997.80Z" fill="#6363c7" stroke="#111" stroke-width="0.8"/><rect x="1020.45" y="1014.90" width="5.7" height="11.4" fill="#598c5c" stroke="#111" stroke-width="0.8"/><path d="M1023.20 1038.10L1029.00 1043.90L1023.20 1049.70L1017.40 1043.90Z" fill="#a1a1a1" stroke="#111" stroke-width="0.8"/><rect x="493.8" y="494.2" width="10" height="7" rx="2" fill="#d9d9d9"/><rect x="490.8" y="504.3" width="10.5" height="7.3" rx="2" fill="#d9d9d9"/><path d="M494.8 498.9H502.8M491.8 509.2H500.3" stroke="#444" stroke-width="1"/><path d="M504.3 496.5C508.3 497.0 508.3 500.0 508.3 503.0V490.8" fill="none"/><path d="M504.0 496.2Q508.4 496.6 508.4 502.0V505.5Q508.4 508.2 502.8 508.2" fill="none" stroke="#d9d9d9" stroke-width="1.1"/><path d="M513 501.3L517 505.3L521 501.3" fill="none" stroke="#d8d8d8" stroke-width="1.2"/><rect x="126.2" y="537.2" width="10" height="7" rx="2" fill="#d9d9d9"/><rect x="123.2" y="547.3" width="10.5" height="7.3" rx="2" fill="#d9d9d9"/><path d="M127.2 541.9H135.2M124.2 552.2H132.7" stroke="#444" stroke-width="1"/><path d="M136.7 539.5C140.7 540.0 140.7 543.0 140.7 546.0V123.2" fill="none"/><path d="M136.4 539.2Q140.8 539.6 140.8 545.0V548.5Q140.8 551.2 135.2 551.2" fill="none" stroke="#d9d9d9" stroke-width="1.1"/><rect x="356.8" y="537.2" width="10" height="7" rx="2" fill="#d9d9d9"/><rect x="353.8" y="547.3" width="10.5" height="7.3" rx="2" fill="#d9d9d9"/><path d="M357.8 541.9H365.8M354.8 552.2H363.3" stroke="#444" stroke-width="1"/><path d="M367.3 539.5C371.3 540.0 371.3 543.0 371.3 546.0V353.8" fill="none"/><path d="M367.0 539.2Q371.4 539.6 371.4 545.0V548.5Q371.4 551.2 365.8 551.2" fill="none" stroke="#d9d9d9" stroke-width="1.1"/><path d="M104 541L110 546.5L104 552" fill="none" stroke="#d8d8d8" stroke-width="1.2"/><path d="M335 541L341 546.5L335 552" fill="none" stroke="#d8d8d8" stroke-width="1.2"/><path d="M717.3 494.3L724.9 497.3V502.5C724.9 507.5 721.5 510.5 717.3 512.2C713.1 510.5 709.7 507.5 709.7 502.5V497.3Z" fill="#ffffff"/><path d="M713.4 503.2L716.3 506.2L721.6 500.3" fill="none" stroke="#4772b3" stroke-width="2"/><path d="M736 499.2V511.2H747.2" fill="none" stroke="#cfcfcf" stroke-width="1.5"/><path d="M739.2 495.8H746.5L750.8 500.1V507.6H739.2Z" fill="none" stroke="#cfcfcf" stroke-width="1.5"/><path d="M746 495.8L750.8 500.6H746Z" fill="#cfcfcf"/><path d="M762.5 497.5L772.5 507.5M772.5 497.5L762.5 507.5" stroke="#e0e0e0" stroke-width="1.2"/><g fill="none" stroke="#bdbdbd" stroke-width="1.2" stroke-linejoin="round"><path d="M801.5 494.3L807 499.8L803.8 501.5L800 505.3L800.6 508.5L799.1 510L791.8 502.7L793.3 501.2L796.5 501.8L800.3 498L802 494.8Z"/><path d="M795.3 506.5L789.5 512.3"/></g></svg>
</body></html>
